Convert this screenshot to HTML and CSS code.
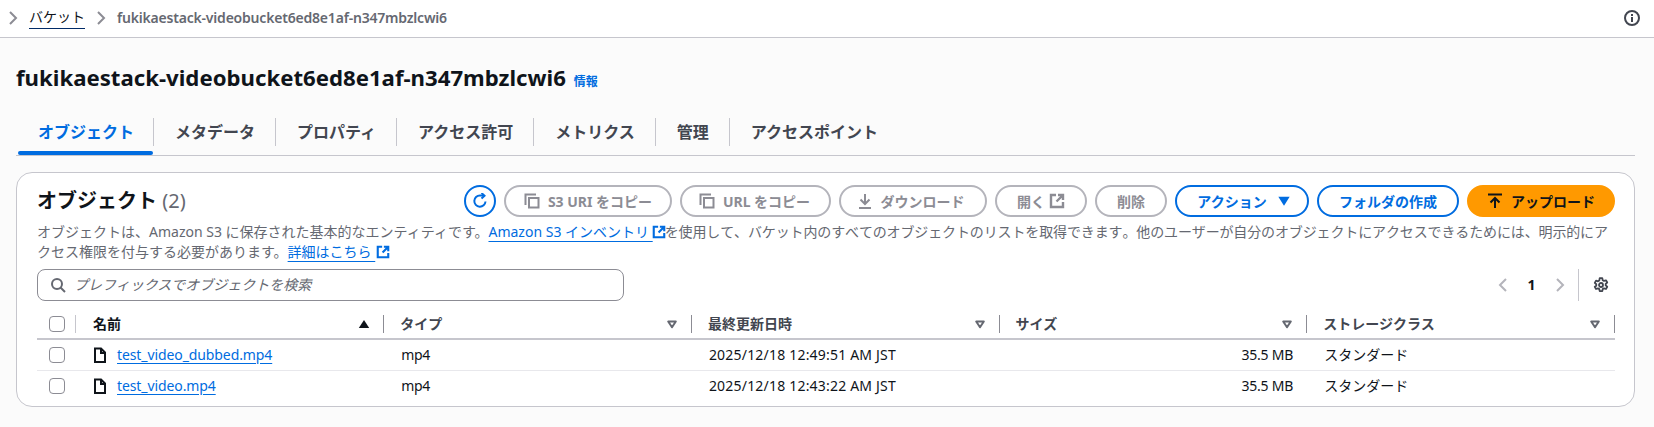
FILE: index.html
```html
<!DOCTYPE html>
<html lang="ja">
<head>
<meta charset="utf-8">
<title>fukikaestack-videobucket6ed8e1af-n347mbzlcwi6</title>
<link rel="stylesheet" href="styles.css">
</head>
<body>
<svg class="sprite" width="0" height="0">
  <symbol id="i-ext" viewBox="0 0 16 16"><path d="M14 9v5H2V2h5" fill="none" stroke="currentColor" stroke-width="2.400"/><path d="M9 2h5v5M14 2 7.500 8.500" fill="none" stroke="currentColor" stroke-width="2.400"/></symbol>
  <symbol id="i-copy" viewBox="0 0 16 16"><path d="M1.500 12V1.500H12" fill="none" stroke="currentColor" stroke-width="2"/><rect x="5" y="5" width="9.500" height="9.500" fill="none" stroke="currentColor" stroke-width="2"/></symbol>
  <symbol id="i-caret" viewBox="0 0 12 12"><path d="M2.200 3.500h7.600L6 9.200z" fill="none" stroke="currentColor" stroke-width="2" stroke-linejoin="round"/></symbol>
  <symbol id="i-file" viewBox="0 0 16 16"><path d="M3 1.500h6l4 4v9.500H3zM9 1.500v4.500h4" fill="none" stroke="currentColor" stroke-width="2" stroke-linejoin="miter"/></symbol>
</svg>
<header class="topbar">
  <nav class="crumbs">
    <svg class="crumb-chev" viewBox="0 0 16 16"><path d="m5 2 6 6-6 6" fill="none" stroke="currentColor" stroke-width="2"/></svg>
    <a class="crumb-link">バケット</a>
    <svg class="crumb-chev" viewBox="0 0 16 16"><path d="m5 2 6 6-6 6" fill="none" stroke="currentColor" stroke-width="2"/></svg>
    <span class="crumb-current">fukikaestack-videobucket6ed8e1af-n347mbzlcwi6</span>
  </nav>
  <svg class="info-icon" viewBox="0 0 16 16"><circle cx="8" cy="8" r="7" fill="none" stroke="currentColor" stroke-width="2"/><path d="M8 7v5M8 4v2" fill="none" stroke="currentColor" stroke-width="2"/></svg>
</header>
<main class="content">
  <div class="title-row">
    <h1 class="page-title">fukikaestack-videobucket6ed8e1af-n347mbzlcwi6</h1>
    <a class="info-link">情報</a>
  </div>
  <div class="tabs">
    <a class="tab tab-active">オブジェクト</a>
    <a class="tab">メタデータ</a>
    <a class="tab">プロパティ</a>
    <a class="tab">アクセス許可</a>
    <a class="tab">メトリクス</a>
    <a class="tab">管理</a>
    <a class="tab">アクセスポイント</a>
  </div>
  <section class="card">
    <div class="card-head">
      <h2 class="card-title">オブジェクト <span class="count">(2)</span></h2>
      <div class="actions">
        <button class="btn-refresh" aria-label="refresh"><svg class="ico" viewBox="0 0 16 16"><path d="M13.500 8.500A5.600 5.600 0 1 1 8 2.500h3" fill="none" stroke="currentColor" stroke-width="2"/><path d="M9.500 0 12.500 2.700 9.500 5.500" fill="none" stroke="currentColor" stroke-width="2"/></svg></button>
        <button class="btn btn-disabled btn-s3"><svg class="ico"><use href="#i-copy"/></svg>S3 URI をコピー</button>
        <button class="btn btn-disabled btn-url"><svg class="ico"><use href="#i-copy"/></svg>URL をコピー</button>
        <button class="btn btn-disabled btn-dl"><svg class="ico" viewBox="0 0 16 16"><path d="M8 1v9.500M3.500 6.500 8 11l4.500-4.500M2 15h12" fill="none" stroke="currentColor" stroke-width="2"/></svg>ダウンロード</button>
        <button class="btn btn-disabled btn-open">開く<svg class="ico"><use href="#i-ext"/></svg></button>
        <button class="btn btn-disabled btn-del">削除</button>
        <button class="btn btn-normal btn-act">アクション<svg class="ico-tri" viewBox="0 0 16 16"><path d="M1.500 3h13L8 13.500z" fill="currentColor"/></svg></button>
        <button class="btn btn-normal btn-folder">フォルダの作成</button>
        <button class="btn btn-primary"><svg class="ico" viewBox="0 0 16 16"><path d="M1 1.500h14M8 15V5M3.500 9.500 8 5l4.500 4.500" fill="none" stroke="currentColor" stroke-width="2"/></svg>アップロード</button>
      </div>
    </div>
    <p class="desc">オブジェクトは、Amazon S3 に保存された基本的なエンティティです。<a class="link">Amazon S3 インベントリ </a><svg class="ext-inline ext-first"><use href="#i-ext"/></svg><span class="desc-run">を使用して、バケット内のすべてのオブジェクトのリストを取得できます。他のユーザーが自分のオブジェクトにアクセスできるためには、明示的にア</span>クセス権限を付与する必要があります。<a class="link">詳細はこちら </a><svg class="ext-inline"><use href="#i-ext"/></svg></p>
    <div class="tools">
      <label class="search">
        <svg class="ico search-ico" viewBox="0 0 16 16"><circle cx="7" cy="7" r="5" fill="none" stroke="currentColor" stroke-width="2"/><path d="m10.500 10.500 4.500 4.500" fill="none" stroke="currentColor" stroke-width="2"/></svg>
        <span class="placeholder">プレフィックスでオブジェクトを検索</span>
      </label>
      <div class="pager">
        <svg class="pg-chev" viewBox="0 0 16 16"><path d="m11 2-6 6 6 6" fill="none" stroke="currentColor" stroke-width="2"/></svg>
        <span class="pg-num">1</span>
        <svg class="pg-chev" viewBox="0 0 16 16"><path d="m5 2 6 6-6 6" fill="none" stroke="currentColor" stroke-width="2"/></svg>
        <span class="pg-sep"></span>
        <svg class="gear" viewBox="0 0 16 16"><path d="M6.700 1.200h2.600l.4 2 1.300.75 1.950-.65 1.300 2.250-1.550 1.350v1.500l1.550 1.350-1.300 2.250-1.950-.65-1.300.75-.4 2H6.700l-.4-2-1.300-.75-1.950.65-1.300-2.250L3.300 8.750v-1.500L1.750 5.900l1.300-2.250L5 4.300l1.300-.75z" fill="none" stroke="currentColor" stroke-width="1.800" stroke-linejoin="round"/><circle cx="8" cy="8" r="2" fill="none" stroke="currentColor" stroke-width="1.800"/></svg>
      </div>
    </div>
    <table class="grid">
      <colgroup><col class="c-check"><col class="c-name"><col class="c-col"><col class="c-col"><col class="c-col"><col class="c-col"></colgroup>
      <thead>
        <tr>
          <th><span class="th-in th-check"><span class="box"></span></span></th>
          <th><span class="th-in th-sorted">名前<svg class="sort-up" viewBox="0 0 12 12"><path d="M.8 10 6 2l5.200 8z" fill="currentColor"/></svg></span></th>
          <th><span class="th-in">タイプ<svg class="sort"><use href="#i-caret"/></svg></span></th>
          <th><span class="th-in">最終更新日時<svg class="sort"><use href="#i-caret"/></svg></span></th>
          <th><span class="th-in">サイズ<svg class="sort"><use href="#i-caret"/></svg></span></th>
          <th><span class="th-in">ストレージクラス<svg class="sort"><use href="#i-caret"/></svg></span></th>
        </tr>
      </thead>
      <tbody>
        <tr>
          <td class="td-check"><span class="box"></span></td>
          <td class="td-name"><svg class="file"><use href="#i-file"/></svg><a class="file-link">test_video_dubbed.mp4</a></td>
          <td class="tight">mp4</td>
          <td class="date">2025/12/18 12:49:51 AM JST</td>
          <td class="num">35.5 MB</td>
          <td>スタンダード</td>
        </tr>
        <tr>
          <td class="td-check"><span class="box"></span></td>
          <td class="td-name"><svg class="file"><use href="#i-file"/></svg><a class="file-link">test_video.mp4</a></td>
          <td class="tight">mp4</td>
          <td class="date">2025/12/18 12:43:22 AM JST</td>
          <td class="num">35.5 MB</td>
          <td>スタンダード</td>
        </tr>
      </tbody>
    </table>
  </section>
</main>
</body>
</html>
```
FILE: styles.css
```css
* { box-sizing: border-box; }
html, body { margin: 0; padding: 0; }
body {
  background: #fbfbfb;
  color: #0f141a;
  font-family: "Noto Sans", "Open Sans", "Noto Sans CJK JP", sans-serif;
  font-size: 14px;
  line-height: 20px;
  overflow: hidden;
  height: 427px;
}
.sprite { position: absolute; }
a { color: inherit; }

.topbar {
  height: 38px;
  background: #fff;
  border-bottom: 1px solid #c6c6cd;
  display: flex;
  align-items: center;
  justify-content: space-between;
  padding: 0 14px 2px 5px;
}
.crumbs { display: flex; align-items: center; gap: 8px; }
.crumb-chev { width: 16px; height: 16px; color: #8c8c94; }
.crumb-link { color: #0f141a; border-bottom: 1px solid #002a66; line-height: 20px; padding: 0 0 1px; font-size: 14px; }
.crumb-current { color: #656871; font-weight: 600; font-size: 14px; letter-spacing: -0.2px; }
.info-icon { width: 16px; height: 16px; color: #424650; }

.content { padding: 0 19px 0 16px; }
.title-row { display: flex; align-items: baseline; gap: 8px; padding-top: 24px; height: 62px; }
.page-title { margin: 0; font-size: 22.200px; line-height: 32px; font-weight: 700; }
.info-link { color: #006ce0; font-size: 12px; font-weight: 700; }

.tabs {
  display: flex;
  align-items: flex-end;
  height: 56px;
  border-bottom: 1px solid #c6c6cd;
  padding-bottom: 9px;
  padding-left: 2px;
}
.tab {
  position: relative;
  padding: 0 20px 0 21px;
  height: 28px;
  line-height: 28px;
  font-size: 16px;
  font-weight: 700;
  color: #424650;
  border-right: 1px solid #c6c6cd;
  white-space: nowrap;
}
.tab:last-child { border-right: 0; }
.tab-active { color: #006ce0; padding: 0 20px; width: 136px; }
.tab-active::after {
  content: "";
  position: absolute;
  left: 0; right: 0;
  bottom: -9px;
  height: 4px;
  border-radius: 2px;
  background: #006ce0;
}

.card {
  margin-top: 16px;
  background: #fff;
  border: 1px solid #c6c6cd;
  border-radius: 16px;
  height: 235px;
  padding: 12px 19px 0 20px;
}
.card-head { display: flex; align-items: center; justify-content: space-between; height: 32px; }
.card-title { margin: 0; font-size: 20px; line-height: 24px; font-weight: 700; }
.count { font-weight: 400; color: #656871; }
.actions { display: flex; gap: 8px; align-items: center; }
.ico { width: 16px; height: 16px; flex: none; }
.btn {
  display: inline-flex;
  align-items: center;
  justify-content: center;
  gap: 8px;
  height: 32px;
  padding: 0;
  border-radius: 20px;
  border: 2px solid #b4b4bb;
  background: #fff;
  font-family: inherit;
  font-size: 14px;
  font-weight: 700;
  white-space: nowrap;
}
.btn-disabled { color: #8c8c94; }
.btn-s3 { width: 168px; }
.btn-url { width: 151px; padding-right: 2px; }
.btn-dl { width: 148px; padding-right: 5px; }
.btn-open { width: 92px; gap: 4px; }
.btn-del { width: 72px; }
.btn-act { width: 134px; gap: 10px; padding-left: 4px; }
.btn-folder { width: 142px; }
.btn-normal { color: #006ce0; border-color: #006ce0; }
.btn-primary { width: 148px; background: #ff9900; border-color: #ff9900; color: #0f141a; gap: 8px; }
.ico-tri { width: 14px; height: 14px; }
.btn-refresh {
  width: 32px;
  height: 32px;
  padding: 0;
  border-radius: 50%;
  border: 2px solid #006ce0;
  color: #006ce0;
  background: #fff;
  display: inline-flex;
  align-items: center;
  justify-content: center;
}
.desc { margin: 5px 0 0; color: #656871; font-size: 14px; line-height: 20px; }
.desc-run { font-kerning: none; letter-spacing: -0.13px; }
.link { color: #006ce0; text-decoration: underline; text-underline-offset: 4px; }
.ext-inline { width: 14px; height: 14px; color: #006ce0; vertical-align: -2px; margin: 0 0 0 1px; }
.ext-first { margin-left: -1px; margin-right: -1px; }

.tools { display: flex; align-items: center; justify-content: space-between; margin-top: 7px; height: 32px; }
.search {
  display: flex;
  align-items: center;
  gap: 8px;
  width: 587px;
  height: 32px;
  border: 1px solid #8c8c94;
  border-radius: 8px;
  padding: 0 12px;
  background: #fff;
}
.search-ico { color: #656871; }
.placeholder { color: #656871; font-style: italic; font-size: 14px; }
.pager { display: flex; align-items: center; height: 32px; }
.pg-chev { width: 16px; height: 16px; color: #b4b4bb; }
.pg-num { font-weight: 700; width: 41px; text-align: center; }
.pg-sep { width: 1px; height: 32px; background: #c6c6cd; margin: 0 14px 0 10px; }
.gear { width: 16px; height: 16px; color: #424650; margin-right: 6px; }

.grid { width: 1578px; table-layout: fixed; border-collapse: collapse; margin-top: 6px; }
.c-check { width: 39px; }
.c-name { width: 308px; }
.c-col { width: 307.500px; }
.grid th { padding: 0 0 5px; height: 32px; vertical-align: bottom; border-bottom: 2px solid #c6c6cd; text-align: left; font-weight: 700; color: #424650; }
.grid th:nth-child(2) { color: #0f141a; }
.th-in {
  display: flex;
  align-items: center;
  justify-content: space-between;
  height: 18px;
  padding: 0 13px 0 16px;
  border-right: 1.500px solid #8c8c94;
}
.th-sorted { padding-left: 17px; }
.th-check { padding: 0 0 0 12px; border-right: 1.500px solid #c6c6cd; }
.sort { width: 12px; height: 12px; color: #656871; }
.sort-up { width: 12px; height: 12px; color: #0f141a; }
.box { display: block; width: 16px; height: 16px; border: 1.500px solid #8c8c94; border-radius: 4px; background: #fff; }
.grid td { height: 31px; padding: 0 0 0 17px; border-bottom: 1px solid #e8e8ec; color: #0f141a; }
.grid tbody tr:last-child td { border-bottom: 0; }
.grid .td-check { padding-left: 12px; }
.grid .td-name { padding-left: 16px; }
.grid .num { text-align: right; padding: 0 14px 0 0; letter-spacing: -0.2px; }
.grid .date { letter-spacing: 0.2px; }
.grid .tight { letter-spacing: -0.3px; }
.file { width: 16px; height: 16px; color: #0f141a; vertical-align: -3px; margin-right: 9px; }
.file-link { color: #006ce0; text-decoration: underline; text-underline-offset: 3px; letter-spacing: -0.1px; }
```
